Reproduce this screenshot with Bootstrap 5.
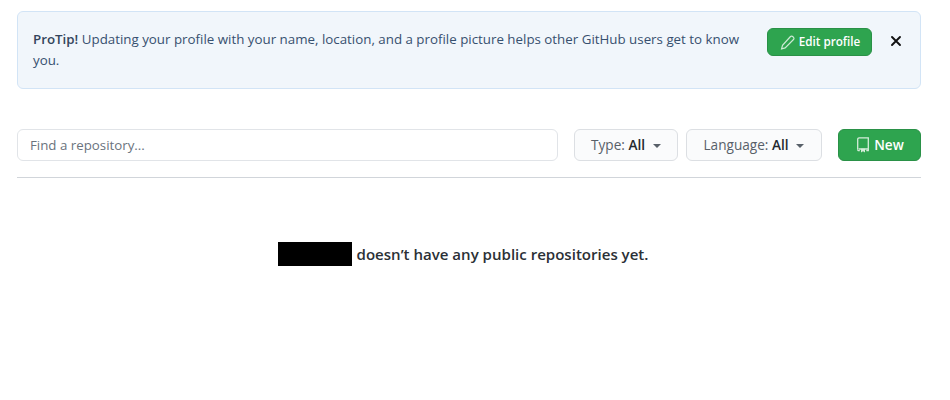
<!DOCTYPE html>
<html lang="en">
<head>
<meta charset="utf-8">
<title>Repositories</title>
<link rel="stylesheet" href="https://cdn.jsdelivr.net/npm/bootstrap@5.3.0/dist/css/bootstrap.min.css">
<style>
body { font-family: "Open Sans", "Noto Sans", sans-serif; font-size: 13.33px; color: #24292e; background: #fff; }
.page-wrap { padding: 11px 29px 0 17px; }
.tip-box { background: #f1f6fb; border: 1px solid #d2e4f6; border-radius: 6px; height: 78px; padding: 15px 15px 0 15px; color: #37506f; line-height: 21px; }
.tip-box strong { font-weight: 600; color: #33455c; }
.tip-text { width: 720px; margin-top: 2px; margin-right: 14px; }
.btn-green { background: #2ea44f; border: 1px solid #2a9147; color: #fff; font-weight: 600; border-radius: 6px; }
.btn-green:hover { background: #2c974b; color: #fff; }
.btn-edit { width: 105px; height: 28px; font-size: 11.7px; padding: 0 0 0 1px; margin-top: 1px; }
.close-x { width: 12px; height: 12px; margin: 8px 0 0 18px; background: none; border: 0; padding: 0; line-height: 0; }
.tool-row { margin-top: 40px; height: 32px; }
.find-input { width: 541px; height: 32px; font-size: 13.3px; border: 1px solid #e1e4e8; border-radius: 6px; padding: 5px 12px; color: #24292e; }
.find-input::placeholder { color: #6a737d; opacity: 1; }
.filter-btn { height: 32px; background: #fafbfc; border: 1px solid #dcdfe3; border-radius: 6px; color: #586069; font-weight: 500; font-size: 13.6px; padding: 0; }
.filter-btn b { font-weight: 600; color: #24292e; }
.filter-type { width: 104px; margin-left: 16px; }
.filter-lang { width: 136px; margin-left: 8px; }
.caret-mark { width: 0; height: 0; border-left: 4px solid transparent; border-right: 4px solid transparent; border-top: 4px solid #586069; margin-left: 8px; margin-top: 2px; }
.btn-new { width: 83px; height: 32px; margin-left: 16px; font-size: 13.6px; padding: 0 0 0 1px; }
.rule-line { border-top: 1px solid #d1d5da; margin: 16px 0 0; opacity: 1; }
.blank-note { margin-top: 64px; padding-right: 12px; font-size: 15.05px; font-weight: 600; color: #2b3036; height: 24px; line-height: 24px; }
.mask-name { width: 74px; height: 24px; background: #000; margin-right: 5px; }
</style>
</head>
<body>
<div class="page-wrap">
  <div class="tip-box d-flex align-items-start">
    <div class="tip-text"><strong>ProTip!</strong> Updating your profile with your name, location, and a profile picture helps other GitHub users get to know you.</div>
    <a href="#" class="btn btn-green btn-edit d-flex align-items-center justify-content-center gap-1">
      <svg width="15" height="15" viewBox="0 0 16 16" fill="none" stroke="#cdead5" stroke-width="1.3"><path d="M11.2 1.6a1.6 1.6 0 0 1 2.3 0l.9.9a1.6 1.6 0 0 1 0 2.3L5.5 13.7l-3.8 1 1-3.8z"/></svg>
      <span>Edit profile</span>
    </a>
    <button class="close-x" type="button" aria-label="Close">
      <svg width="12" height="12" viewBox="0 0 12 12"><path d="M2 2l8 8M10 2l-8 8" stroke="#111" stroke-width="1.9" stroke-linecap="round"/></svg>
    </button>
  </div>

  <div class="tool-row d-flex align-items-center">
    <input class="find-input form-control" type="search" placeholder="Find a repository...">
    <button class="btn filter-btn filter-type d-flex align-items-center justify-content-center" type="button"><span>Type:&nbsp;<b>All</b></span><i class="caret-mark"></i></button>
    <button class="btn filter-btn filter-lang d-flex align-items-center justify-content-center" type="button"><span>Language:&nbsp;<b>All</b></span><i class="caret-mark"></i></button>
    <a href="#" class="btn btn-green btn-new d-flex align-items-center justify-content-center gap-1">
      <svg width="14" height="16" viewBox="0 0 14 16" fill="none" stroke="#d5edda" stroke-width="1.3"><path d="M1.7 12.5V2.2A1.4 1.4 0 0 1 3.1.8h9.2v11.2H2.7"/><path d="M1.7 12.5a1 1 0 0 0 1 1.2h1.1"/><path d="M12.3 12v1.7h-2"/><path d="M5 11.8h4v3.7l-2-1.2-2 1.2z" fill="#d5edda" stroke="none"/></svg>
      <span>New</span>
    </a>
  </div>
  <hr class="rule-line">
  <div class="blank-note d-flex justify-content-center">
    <span class="mask-name"></span><span>doesn’t have any public repositories yet.</span>
  </div>
</div>
</body>
</html>
